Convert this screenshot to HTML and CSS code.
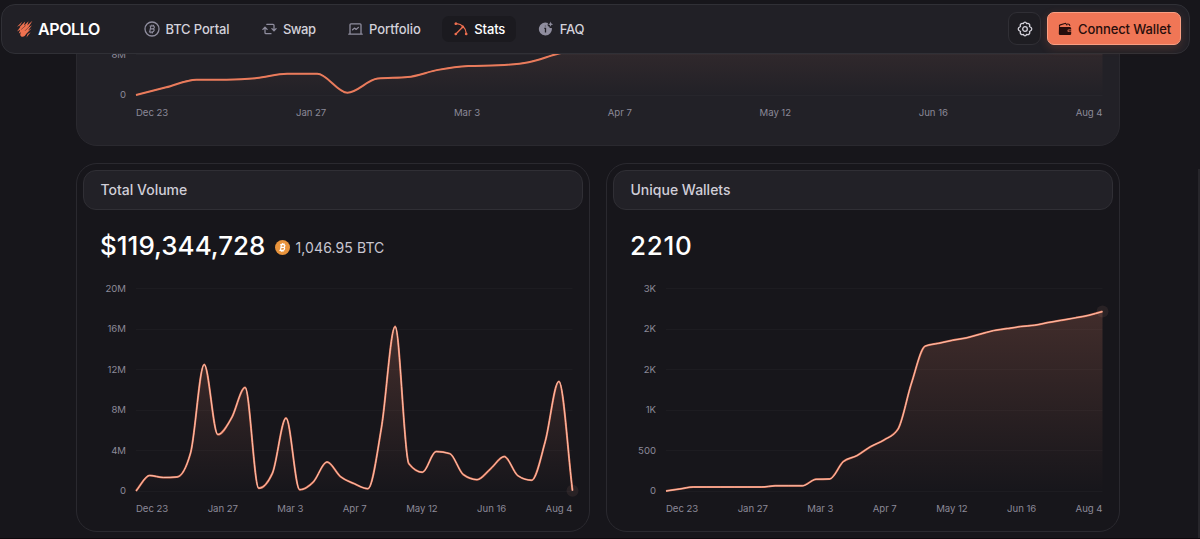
FILE: index.html
```html
<!DOCTYPE html>
<html lang="en">
  <head>
    <meta charset="UTF-8" />
    <meta name="viewport" content="width=device-width, initial-scale=1.0" />
    <title>Apollo - Stats</title>
    <link rel="stylesheet" href="styles.css">
  </head>
  <body>
    <header class="navbar">
      <a href="#" class="logo">
        <svg width="17" height="18" viewBox="0 0 17 18" fill="#f0714f">
          <path d="M16.400.8 11.200 5.400 12.600 1.200 8 5.800 9.200 1.500 3.400 7.200 4.500 6.800 1 11.600l3.200-1.900-1.400 3.900 2.200-1.400c-1.300 2-.9 4 .7 4.500 2 .6 3.500-.8 4.400-2.600l5.400-5.500-3.500 1.900 4-5.300-3.600 2.200z" />
          <path d="m14.600 12.200-4.200 5.200 1.200-3.300z" />
          <path d="m6.400 1.600-5.400 5.200 3.200-1.600z" />
          <path d="m5.200 9.500 4.500-4M9 10.800l4.500-4.500" stroke="#212026" stroke-width=".5" />
        </svg>
        <span>APOLLO</span>
      </a>
      <nav class="menu">
        <a href="#" class="item portal">
          <svg width="16" height="16" viewBox="0 0 16 16" fill="none" stroke="currentColor" stroke-width="1.3">
            <circle cx="8" cy="8" r="7" />
            <path d="M6.9 4.7 5.7 11.2M5.6 5h3.2c2.4 0 1.9 2.9-.3 2.9H6.4 8.8c2.2 0 1.6 3.1-.8 3.1H4.9M8 3.6 7.8 5M7 11l-.2 1.4M9.7 3.8 9.5 5M8.6 11l-.2 1.4" stroke-width="1.1" />
          </svg>
          <span>BTC Portal</span>
        </a>
        <a href="#" class="item swap">
          <svg width="15" height="14" viewBox="0 0 15 14" fill="none" stroke="currentColor" stroke-width="1.3" stroke-linecap="round" stroke-linejoin="round">
            <path d="M4.8 2.3h6.2c.6 0 1 .4 1 1v5.2M9.9 6.600 12 8.700l2.100-2.100M9 11.700H4c-.6 0-1-.4-1-1V5.500M.9 7.400 3 5.300l2.100 2.100" />
          </svg>
          <span>Swap</span>
        </a>
        <a href="#" class="item portfolio">
          <svg width="15" height="14" viewBox="0 0 15 14" fill="none" stroke="currentColor" stroke-width="1.3" stroke-linecap="round" stroke-linejoin="round">
            <path d="M2 11.700V2.800c0-.6.4-1 1-1h9c.6 0 1 .4 1 1v8.900M.8 12.200h13.400M4.600 7.800l1.800-1.700 1.900 1.300 2.100-2" />
          </svg>
          <span>Portfolio</span>
        </a>
        <a href="#" class="item stats active">
          <svg width="14" height="14" viewBox="0 0 14 14" fill="none" stroke="currentColor" stroke-width="1.3" stroke-linecap="round" stroke-linejoin="round">
            <path d="M2.600 1.700c5.300.3 9.300 4.300 9.600 9.500M8.500 5.200 2.600 11.200" />
            <circle cx="1.800" cy="1.700" r=".7" />
            <circle cx="1.800" cy="12" r=".7" />
            <circle cx="12.200" cy="12" r=".7" />
            <circle cx="8.800" cy="4.900" r=".7" />
          </svg>
          <span>Stats</span>
        </a>
        <a href="#" class="item faq">
          <svg width="16" height="16" viewBox="0 0 16 16" fill="currentColor">
            <path d="M10 2.100A6.500 6.500 0 1 0 13.800 7c-2 .3-2.400-.3-2.600-1.500-1.300-.3-2-.7-1.200-3.400z" />
            <path d="m12.600.6.7 1.900 1.900.7-1.900.7-.7 1.900-.7-1.900-1.900-.7 1.900-.7z" />
            <path d="M6.300 7.400h1.200v4.200M7.400 4.800v.5" stroke="#212026" stroke-width="1.300" fill="none" />
          </svg>
          <span>FAQ</span>
        </a>
      </nav>
      <div class="actions">
        <button class="settings" aria-label="Settings">
          <svg width="16" height="16" viewBox="0 0 16 16" fill="none" stroke="currentColor" stroke-width="1.300" stroke-linejoin="round">
            <path d="M8 1.200Q9 1.200 9.700 2.600 11.300 2 12.200 3 13.100 3.900 12.500 5.500 14.800 6.500 14.800 8T12.500 10.500Q13.100 12.100 12.200 13 11.300 14 9.700 13.400 9 14.800 8 14.800T6.300 13.400Q4.700 14 3.800 13 2.900 12.100 3.500 10.500 1.200 9.500 1.200 8T3.500 5.500Q2.900 3.900 3.800 3 4.700 2 6.300 2.600 7 1.200 8 1.200z" />
            <circle cx="8" cy="8" r="2.300" />
          </svg>
        </button>
        <button class="connect">
          <svg width="14" height="14" viewBox="0 0 14 14" fill="#270e0c">
            <path d="M1 4.500c.4.300.8.400 1.300.4h9.200c1 0 1.700.7 1.700 1.600v1h-2.400a1.300 1.300 0 0 0 0 2.600h2.400v1.400c0 .9-.7 1.600-1.700 1.600H2.600C1.500 13.100.8 12.400.8 11.400z" />
            <path d="M10.900 8.200h2.300v1.200h-2.300a.6.600 0 0 1 0-1.200z" />
            <path d="M1.400 4.300c-.2-.8.200-1.200.9-1.400L7.600 1.300l1.200 1.700M9.500 2c1.400-.1 2.200.4 2.300 1.500" fill="none" stroke="#270e0c" stroke-width="1.100" stroke-linecap="round" />
          </svg>
          <span>Connect Wallet</span>
        </button>
      </div>
    </header>

    <main class="page">
      <section class="card tvl">
        <div class="chart" data-chart="tvl">
          <div class="y-axis"><span>8M</span><span>0</span></div>
          <div class="plot"></div>
          <div class="x-axis"><span>Dec 23</span><span>Jan 27</span><span>Mar 3</span><span>Apr 7</span><span>May 12</span><span>Jun 16</span><span>Aug 4</span></div>
        </div>
      </section>

      <section class="card">
        <h2 class="card-title">Total Volume</h2>
        <div class="total">
          <strong class="volume">$119,344,728</strong>
          <svg class="coin" width="15" height="15" viewBox="0 0 16 16">
            <circle cx="8" cy="8" r="8" fill="#e8933c" />
            <path d="M6.900 4.700 5.800 11.200M5.600 4.900h3.200c2.600 0 2.100 3-.3 3H6.400 8.800c2.300 0 1.700 3.200-.8 3.200H4.700M8 3.400 7.800 5M7 11l-.2 1.500M9.700 3.600 9.500 5M8.600 11l-.2 1.500" fill="none" stroke="#fff" stroke-width="1.300" />
          </svg>
          <span class="btc">1,046.95 BTC</span>
        </div>
        <div class="chart" data-chart="volume">
          <div class="y-axis"><span>20M</span><span>16M</span><span>12M</span><span>8M</span><span>4M</span><span>0</span></div>
          <div class="plot"></div>
          <div class="x-axis"><span>Dec 23</span><span>Jan 27</span><span>Mar 3</span><span>Apr 7</span><span>May 12</span><span>Jun 16</span><span>Aug 4</span></div>
        </div>
      </section>

      <section class="card">
        <h2 class="card-title">Unique Wallets</h2>
        <div class="total">
          <strong class="wallets">2210</strong>
        </div>
        <div class="chart" data-chart="wallets">
          <div class="y-axis"><span>3K</span><span>2K</span><span>2K</span><span>1K</span><span>500</span><span>0</span></div>
          <div class="plot"></div>
          <div class="x-axis"><span>Dec 23</span><span>Jan 27</span><span>Mar 3</span><span>Apr 7</span><span>May 12</span><span>Jun 16</span><span>Aug 4</span></div>
        </div>
      </section>
    </main>
    <div class="scrollbar"></div>
    <script src="charts.js"></script>
  </body>
</html>
```
FILE: styles.css
```css
* {
  box-sizing: border-box;
  margin: 0;
  padding: 0;
}
body {
  height: 539px;
  overflow: hidden;
  background-color: #17161b;
  border-bottom: 1px solid #0e090d;
  color: #d3d1da;
  font-family: Inter, "Liberation Sans", sans-serif;
}
a {
  color: inherit;
  text-decoration: none;
}
button {
  font-family: inherit;
}

/* top bar */
.navbar {
  position: fixed;
  z-index: 2;
  top: 4px;
  left: 1px;
  width: 1189px;
  height: 50px;
  padding: 0 8px 0 14px;
  display: flex;
  align-items: center;
  background-color: #212026;
  border: 1px solid #303036;
  border-radius: 14px;
}
.logo {
  display: flex;
  align-items: center;
  gap: 5px;
  width: 115.5px;
  color: #fff;
  font-size: 16px;
  font-weight: 600;
  letter-spacing: -0.4px;
}
.menu {
  display: flex;
  gap: 9.5px;
}
.item {
  display: flex;
  align-items: center;
  gap: 6px;
  height: 26px;
  padding: 0 11px 0 12px;
  margin-top: -1px;
  border-radius: 7px;
  font-size: 13px;
  font-weight: 500;
  letter-spacing: -0.15px;
}
.item svg {
  flex: none;
  color: #8f8d9e;
}
.swap {
  letter-spacing: -0.5px;
}
.portfolio {
  letter-spacing: -0.05px;
}
.item.active {
  margin-left: 1px;
  color: #fff;
  background-color: #1b1a1f;
}
.item.active svg {
  color: #ee6f50;
}
.actions {
  display: flex;
  gap: 6px;
  margin: -1px 0 0 auto;
}
.settings {
  display: flex;
  align-items: center;
  justify-content: center;
  width: 33px;
  height: 33px;
  color: #d3d1da;
  background-color: #1e1d22;
  border: 1px solid #302f35;
  border-radius: 9px;
}
.connect {
  display: flex;
  align-items: center;
  gap: 6px;
  width: 134px;
  height: 33px;
  padding-left: 10px;
  color: #270e0c;
  background-color: #f07656;
  border: 1px solid #fa9f83;
  border-radius: 7px;
  box-shadow: 0 3px 10px rgba(240, 118, 86, 0.2);
  font-size: 13px;
  font-weight: 500;
  letter-spacing: -0.1px;
  white-space: nowrap;
}

/* cards */
.page {
  display: grid;
  grid-template-columns: 1fr 1fr;
  gap: 17px 16.5px;
  width: 1043.5px;
  margin: 20px 0 0 76px;
}
.card {
  height: 369px;
  padding: 6px;
  border: 1px solid #2a292f;
  border-radius: 21px;
}
.card.tvl {
  grid-column: 1 / 3;
  height: 126px;
  background-color: #222127;
}
.card-title {
  height: 40px;
  padding-left: 16.5px;
  line-height: 37px;
  background-color: #222127;
  border: 1px solid #302f35;
  border-radius: 13px;
  color: #d0ced8;
  font-size: 14px;
  font-weight: 500;
}
.total {
  display: flex;
  align-items: center;
  height: 34px;
  margin: 18px 0 20px 17px;
}
.total strong {
  color: #fff;
  font-size: 26px;
  font-weight: 500;
}
.total .wallets {
  letter-spacing: 0.7px;
}
.coin {
  margin: 5px 5px 0 10px;
}
.btc {
  padding-top: 4px;
  color: #c8c6d1;
  font-size: 14px;
  letter-spacing: 0.1px;
}

/* charts */
.chart {
  display: grid;
  grid-template-columns: 43px 1fr;
  column-gap: 10px;
  padding-right: 10px;
  color: #8b8998;
  font-size: 9.6px;
}
.tvl .chart {
  margin-top: 21px;
}
.y-axis {
  display: flex;
  flex-direction: column;
  justify-content: space-between;
  height: 215px;
  line-height: 13px;
  text-align: right;
}
.tvl .y-axis {
  height: 53px;
}
.plot {
  height: 203px;
  margin-top: 6px;
}
.tvl .plot {
  height: 41px;
}
.plot svg {
  display: block;
  width: 100%;
  height: 100%;
  overflow: visible;
}
.x-axis {
  grid-column: 2;
  display: flex;
  justify-content: space-between;
  margin-top: 5px;
  line-height: 14px;
  letter-spacing: -0.05px;
}
.grid-line {
  stroke: #1d1c21;
}
.line {
  fill: none;
  stroke: #e5795b;
  stroke-width: 2;
}
.line-core {
  fill: none;
  stroke: #fac0ae;
  stroke-width: 1;
}
.tvl .line-core {
  stroke: #ec7d5d;
}
.tvl .grid-line {
  stroke: #27262c;
}
.marker {
  fill: #ffb6a2;
  fill-opacity: 0.08;
}

.scrollbar {
  position: fixed;
  right: 0;
  top: 169px;
  bottom: 1px;
  width: 2px;
  background-color: #27262b;
}
```
FILE: charts.js
```js
var charts = {
  tvl: {
    max: 8,
    steps: 1,
    fill: 0.13,
    data: [0, 1.5, 3, 3, 3.3, 4.15, 4.15, 0.45, 3.2, 3.5, 4.9, 5.65, 5.8, 6.4, 8.1, 9.3, 10, 10.5, 11, 11.5,
      12, 12.3, 12.6, 13, 13.4, 13.8, 14, 14.3, 14.7, 15, 15.2, 15.6, 16]
  },
  volume: {
    max: 20,
    steps: 5,
    fill: 0.2,
    marker: true,
    data: [0, 1.53, 1.33, 1.38, 3.75, 12.47, 5.56, 7.18, 10.2, 0.27, 1.75, 7.18, 0.13, 0.89, 2.86, 1.41, 0.72,
      0.23, 6.3, 16.2, 2.7, 1.85, 3.88, 3.68, 1.61, 1.12, 2.2, 3.39, 1.5, 1.06, 4.87, 10.8, 0.03]
  },
  wallets: {
    max: 2500,
    steps: 5,
    fill: 0.19,
    marker: true,
    data: [0, 25, 49, 49, 49, 49, 49, 49, 64, 64, 64, 144, 148, 362, 436, 547, 630, 760, 1330, 1784, 1819, 1856,
      1885, 1930, 1975, 2000, 2025, 2041, 2074, 2103, 2132, 2164, 2210]
  }
};

// monotone cubic curve through all the points
function curve(points) {
  var n = points.length;
  var step = points[1][0] - points[0][0];
  var slopes = [];
  var tangents = [];
  for (var i = 0; i < n - 1; i++) {
    slopes.push((points[i + 1][1] - points[i][1]) / step);
  }
  tangents[0] = slopes[0];
  tangents[n - 1] = slopes[n - 2];
  for (i = 1; i < n - 1; i++) {
    var a = slopes[i - 1];
    var b = slopes[i];
    if (a * b <= 0) {
      tangents[i] = 0;
    } else {
      tangents[i] = Math.sign(a) * Math.min(2 * Math.abs(a), 2 * Math.abs(b), Math.abs(a + b) / 2);
    }
  }
  var d = "M" + points[0];
  for (i = 0; i < n - 1; i++) {
    var p = points[i];
    var q = points[i + 1];
    d += "C" + [p[0] + step / 3, p[1] + tangents[i] * step / 3, q[0] - step / 3, q[1] - tangents[i + 1] * step / 3, q[0], q[1]];
  }
  return d;
}

document.querySelectorAll(".chart").forEach(function (el) {
  var name = el.dataset.chart;
  var chart = charts[name];
  var plot = el.querySelector(".plot");
  var w = plot.getBoundingClientRect().width;
  var h = plot.clientHeight;
  var points = chart.data.map(function (v, i) {
    return [i * w / (chart.data.length - 1), h - v / chart.max * h];
  });
  var d = curve(points);
  var top = Math.min.apply(null, points.map(function (p) { return p[1]; }));
  var last = points[points.length - 1];
  var html = '<svg><defs><linearGradient id="' + name + '" gradientUnits="userSpaceOnUse" x1="0" x2="0" y1="' + top + '" y2="' + h + '">' +
    '<stop offset="0" stop-color="#f58d70" stop-opacity="' + chart.fill + '"/>' +
    '<stop offset="1" stop-color="#f58d70" stop-opacity="0"/></linearGradient></defs>';
  for (var i = 0; i <= chart.steps; i++) {
    var y = Math.round(i * h / chart.steps) + 0.5;
    html += '<line class="grid-line" x1="0" x2="' + w + '" y1="' + y + '" y2="' + y + '"/>';
  }
  html += '<path d="' + d + "V" + h + 'H0Z" fill="url(#' + name + ')"/>';
  if (chart.marker) {
    html += '<circle class="marker" cx="' + last[0] + '" cy="' + last[1] + '" r="6"/>';
  }
  html += '<path class="line" d="' + d + '"/><path class="line-core" d="' + d + '"/></svg>';
  plot.innerHTML = html;
});
```
